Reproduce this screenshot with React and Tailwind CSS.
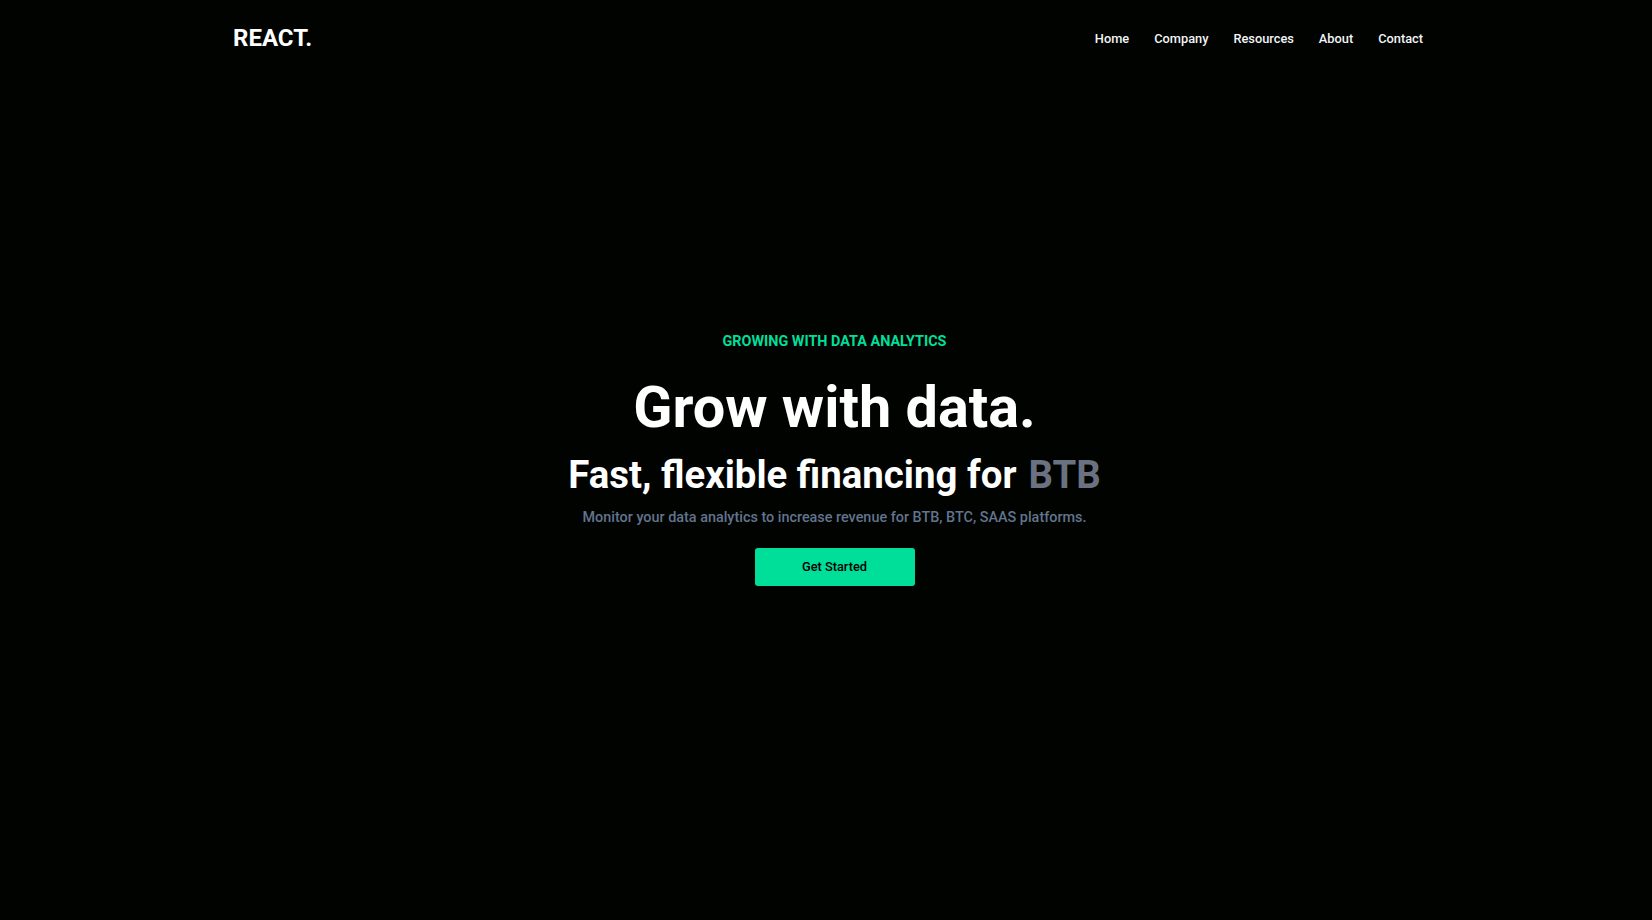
export default function App() {
  const links = ["Home", "Company", "Resources", "About", "Contact"];

  return (
    <div className="min-h-screen bg-[#000300] text-white font-['Roboto',sans-serif]">
      <nav className="mx-auto flex h-[76px] max-w-[1200px] items-center justify-between pl-[7px] pr-[3px]">
        <h1 className="text-2xl font-bold text-white">REACT.</h1>
        <ul className="flex items-center gap-[25px] pt-[1px] text-[12.8px] font-medium text-gray-100">
          {links.map((l) => (
            <li key={l}>{l}</li>
          ))}
        </ul>
      </nav>

      <section className="-mt-[76px] flex h-screen flex-col items-center justify-center pb-[2px] pl-[17px] text-center">
        <p className="text-[14.4px] leading-5 font-bold text-[#00df9a]">GROWING WITH DATA ANALYTICS</p>
        <h1 className="mt-[26px] text-[57.6px] leading-[60px] font-bold">Grow with data.</h1>
        <div className="mt-[17px] flex items-center justify-center">
          <p className="text-[38.4px] leading-[40px] font-bold">Fast, flexible financing for</p>
          <p className="pl-3 text-[38.4px] leading-[40px] font-bold text-gray-500">BTB</p>
        </div>
        <p className="mt-[11px] text-[14.4px] leading-6 font-medium text-slate-500">
          Monitor your data analytics to increase revenue for BTB, BTC, SAAS platforms.
        </p>
        <button className="mt-[18px] w-[160px] rounded-[3px] bg-[#00df9a] py-[9px] text-[12.8px] leading-5 font-medium text-black">
          Get Started
        </button>
      </section>
    </div>
  );
}
